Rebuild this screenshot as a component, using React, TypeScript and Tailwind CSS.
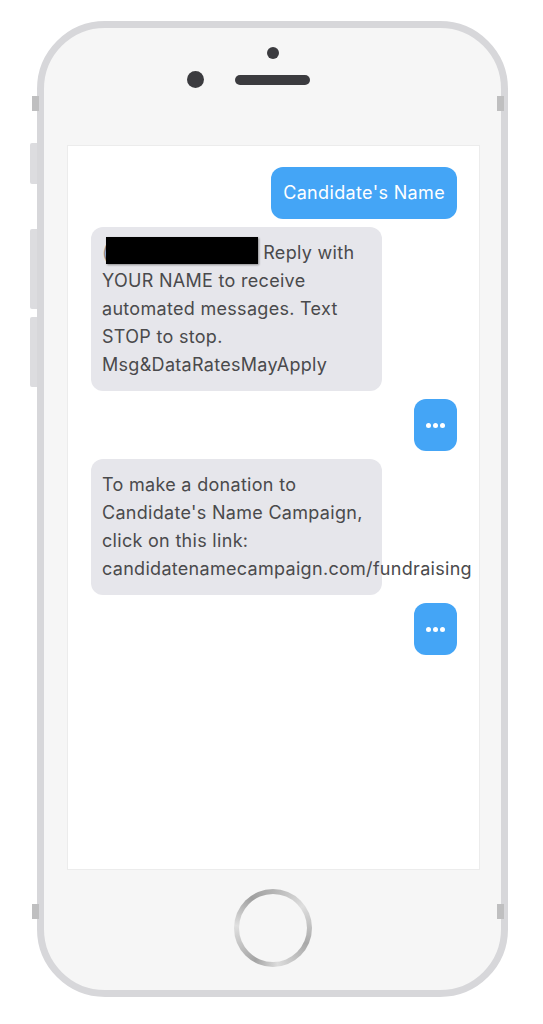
import React from "react";

const font = { fontFamily: '"Inter", "Noto Sans", sans-serif' };

function TypingBubble() {
  return (
    <div className="flex justify-end">
      <div className="flex h-[52px] w-[43px] items-center justify-center gap-[2px] rounded-[12px] bg-[#44a5f6]">
        <span className="h-[5px] w-[5px] rounded-full bg-white" />
        <span className="h-[5px] w-[5px] rounded-full bg-white" />
        <span className="h-[5px] w-[5px] rounded-full bg-white" />
      </div>
    </div>
  );
}

function Incoming({ children }: { children: React.ReactNode }) {
  return (
    <div className="flex justify-start">
      <div className="w-[291px] whitespace-nowrap rounded-[12px] bg-[#e6e6eb] px-[11px] py-[12px] text-[18px] leading-[28px] tracking-[0.3px] text-[#4a4a4c]">
        {children}
      </div>
    </div>
  );
}

export default function App() {
  return (
    <div className="relative h-[1024px] w-[543px] bg-white" style={font}>
      {/* phone body */}
      <div className="absolute left-[37px] top-[21px] flex h-[976px] w-[471px] flex-col items-center rounded-[68px] border-[7px] border-[#d7d7da] bg-[#f6f6f6]">
        <div className="flex h-[117px] w-full flex-col items-center">
          <div className="mt-[19px] h-[12px] w-[12px] rounded-full bg-[#3b3b3f]" />
          <div className="mt-[12px] grid w-full grid-cols-[1fr_75px_1fr] items-center">
            <div className="flex justify-end pr-[31px]">
              <div className="h-[17px] w-[17px] rounded-full bg-[#3b3b3f]" />
            </div>
            <div className="h-[10px] w-[75px] rounded-full bg-[#3b3b3f]" />
            <div />
          </div>
        </div>

        {/* screen */}
        <div className="ml-[2px] flex h-[725px] w-[413px] flex-col gap-[8px] border border-[#ececec] bg-white pl-[23px] pr-[22px] pt-[21px]">
          <div className="flex justify-end">
            <div className="rounded-[12px] bg-[#44a5f6] px-[12px] py-[12px] text-[18px] leading-[28px] tracking-[0.35px] text-white">
              Candidate's Name
            </div>
          </div>
          <Incoming>
            <span className="text-[#8a8a8a]">(</span>
            <span className="relative -top-[2px] ml-[-3px] inline-block h-[27px] w-[152px] bg-black align-top shadow-[1px_1px_2px_rgba(0,0,0,0.4)]" />{" "}
            Reply with
            <br />
            YOUR NAME to receive
            <br />
            automated messages. Text
            <br />
            STOP to stop.
            <br />
            Msg&amp;DataRatesMayApply
          </Incoming>
          <TypingBubble />
          <Incoming>
            To make a donation to
            <br />
            Candidate's Name Campaign,
            <br />
            click on this link:
            <br />
            candidatenamecampaign.com/fundraising
          </Incoming>
          <TypingBubble />
        </div>

        {/* home button */}
        <div className="mt-[19px] flex h-[78px] w-[78px] items-center justify-center rounded-full bg-[conic-gradient(from_0deg,#b4b4b4,#dedede_15%,#a9a9a9_32%,#dcdcdc_48%,#a4a4a4_58%,#e0e0e0_76%,#9f9f9f_90%,#b4b4b4)]">
          <div className="h-[68px] w-[68px] rounded-full bg-[#f6f6f6]" />
        </div>
      </div>

      {/* side buttons */}
      <div className="absolute left-[32px] top-[96px] h-[15px] w-[7px] bg-[#bfbfc0]" />
      <div className="absolute left-[30px] top-[143px] h-[41px] w-[7px] rounded-l-[2px] bg-[#dcdcdf]" />
      <div className="absolute left-[30px] top-[229px] h-[80px] w-[7px] rounded-l-[2px] bg-[#dcdcdf]" />
      <div className="absolute left-[30px] top-[317px] h-[70px] w-[7px] rounded-l-[2px] bg-[#dcdcdf]" />
      <div className="absolute left-[32px] top-[904px] h-[15px] w-[7px] bg-[#bfbfc0]" />
      <div className="absolute left-[497px] top-[96px] h-[15px] w-[7px] bg-[#bfbfc0]" />
      <div className="absolute left-[497px] top-[904px] h-[15px] w-[7px] bg-[#bfbfc0]" />
    </div>
  );
}
